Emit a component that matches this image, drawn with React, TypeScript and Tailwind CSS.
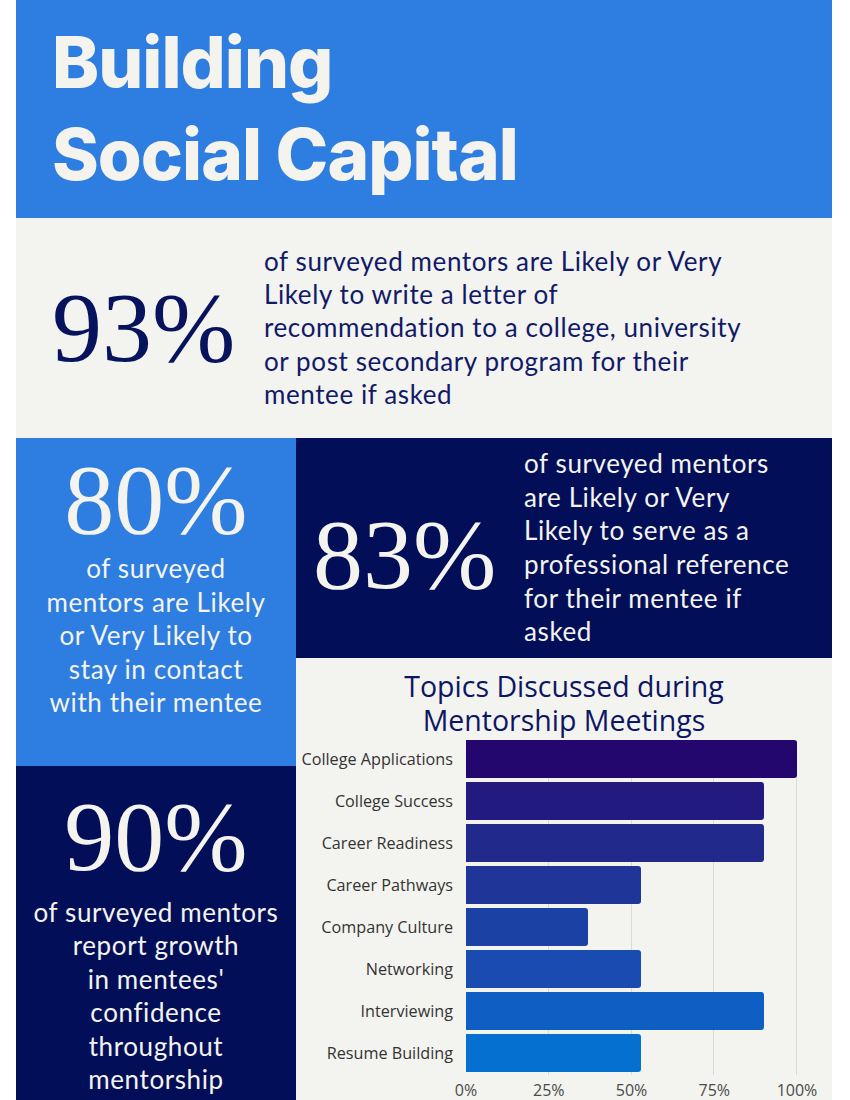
import React from 'react'

type Topic = {
	label: string
	value: number
	color: string
}

const topics: Topic[] = [
	{ label: 'College Applications', value: 100, color: '#24076e' },
	{ label: 'College Success', value: 90, color: '#231a80' },
	{ label: 'Career Readiness', value: 90, color: '#212a8b' },
	{ label: 'Career Pathways', value: 53, color: '#1f3597' },
	{ label: 'Company Culture', value: 37, color: '#1c41a4' },
	{ label: 'Networking', value: 53, color: '#1a4bb0' },
	{ label: 'Interviewing', value: 90, color: '#0f5ec3' },
	{ label: 'Resume Building', value: 53, color: '#0670d1' },
]

const ticks = [0, 25, 50, 75, 100]

const bodyFont = "font-['Lato','Noto_Sans',sans-serif] font-normal tracking-[0.6px]"
const numFont = "font-['Liberation_Serif',serif]"

function TopicsChart() {
	return (
		<div className="flex flex-col">
			<h2 className="text-center text-[28.5px] leading-[34px] text-[#0d1663] font-['Open_Sans',sans-serif]">
				Topics Discussed during
				<br />
				Mentorship Meetings
			</h2>
			<div className="mt-[3px] flex">
				{/* labels */}
				<div className="w-[170px] shrink-0 pr-[13px] flex flex-col gap-[4px]">
					{topics.map(t => (
						<div
							key={t.label}
							className="h-[38px] flex items-center justify-end text-[16.2px] text-[#333333] whitespace-nowrap font-['Open_Sans',sans-serif]"
						>
							{t.label}
						</div>
					))}
				</div>
				{/* bars */}
				<div className="w-[331px] shrink-0 flex flex-col">
					<div className="relative flex flex-col gap-[4px] pb-[3px]">
						{ticks.slice(1).map(t => (
							<div
								key={t}
								className="absolute top-0 bottom-0 w-px bg-[#d9d9d6]"
								style={{ left: `calc(${t}% - 1px)` }}
							/>
						))}
						{topics.map(t => (
							<div key={t.label} className="relative h-[38px]">
								<div
									className="h-full rounded-r-[3px]"
									style={{ width: `${t.value}%`, backgroundColor: t.color }}
								/>
							</div>
						))}
					</div>
					<div className="relative h-[28px] text-[16px] text-[#4a4a4a] font-['Open_Sans',sans-serif]">
						{ticks.map(t => (
							<span
								key={t}
								className="absolute top-[4px] -translate-x-1/2 leading-[22px]"
								style={{ left: `${t}%` }}
							>
								{t}%
							</span>
						))}
					</div>
				</div>
			</div>
		</div>
	)
}

export default function App() {
	return (
		<div className="w-[850px] h-[1100px] bg-white overflow-hidden">
			<div className="ml-4 w-[816px] flex flex-col">
				{/* header */}
				<div className="h-[218px] bg-[#2d7ee0] pl-[36px] pt-[16px]">
					<h1 className="text-[71px] leading-[92px] font-extrabold text-[#f4f3ee] tracking-[-1px] font-['Inter',sans-serif]">
						Building
						<br />
						Social Capital
					</h1>
				</div>

				{/* 93% row */}
				<div className="h-[220px] bg-[#f3f3ef] flex items-center pl-[36px]">
					<div className={`w-[212px] shrink-0 text-[100px] leading-[100px] text-[#08135e] ${numFont}`}>
						93%
					</div>
					<p className={`text-[26px] leading-[33.3px] text-[#111a68] whitespace-nowrap ${bodyFont}`}>
						of surveyed mentors are Likely or Very
						<br />
						Likely to write a letter of
						<br />
						recommendation to a college, university
						<br />
						or post secondary program for their
						<br />
						mentee if asked
					</p>
				</div>

				{/* lower grid */}
				<div className="flex">
					{/* left column */}
					<div className="w-[280px] shrink-0 flex flex-col">
						<div className="h-[328px] bg-[#2d7ee0] pt-[12px] flex flex-col items-center text-[#f4f3ee]">
							<div className={`text-[100px] leading-[100px] ${numFont}`}>80%</div>
							<p className={`mt-[2px] text-center text-[26px] leading-[33.5px] whitespace-nowrap ${bodyFont}`}>
								of surveyed
								<br />
								mentors are Likely
								<br />
								or Very Likely to
								<br />
								stay in contact
								<br />
								with their mentee
							</p>
						</div>
						<div className="h-[334px] bg-[#020f58] pt-[21px] flex flex-col items-center text-[#f4f3ee]">
							<div className={`text-[100px] leading-[100px] ${numFont}`}>90%</div>
							<p className={`mt-[9px] text-center text-[26px] leading-[33.4px] whitespace-nowrap ${bodyFont}`}>
								of surveyed mentors
								<br />
								report growth
								<br />
								in mentees'
								<br />
								confidence
								<br />
								throughout
								<br />
								mentorship
							</p>
						</div>
					</div>

					{/* right column */}
					<div className="flex-1 flex flex-col">
						<div className="h-[220px] bg-[#020f58] flex items-center pl-[17px] text-[#f4f3ee]">
							<div className={`w-[211px] shrink-0 mt-[14px] text-[100px] leading-[100px] ${numFont}`}>83%</div>
							<p className={`text-[26px] leading-[33.6px] whitespace-nowrap ${bodyFont}`}>
								of surveyed mentors
								<br />
								are Likely or Very
								<br />
								Likely to serve as a
								<br />
								professional reference
								<br />
								for their mentee if
								<br />
								asked
							</p>
						</div>
						<div className="h-[442px] bg-[#f3f3ef] pt-[11px]">
							<TopicsChart />
						</div>
					</div>
				</div>
			</div>
		</div>
	)
}
